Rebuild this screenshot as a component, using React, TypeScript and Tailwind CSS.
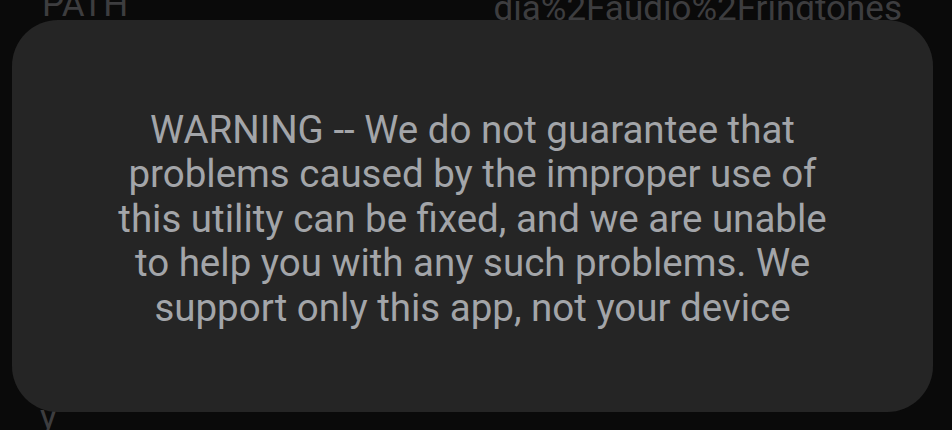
export default function App() {
  const lines = [
    "WARNING -- We do not guarantee that",
    "problems caused by the improper use of",
    "this utility can be fixed, and we are unable",
    "to help you with any such problems. We",
    "support only this app, not your device",
  ];

  return (
    <div
      className="relative w-[952px] h-[430px] overflow-hidden bg-[#0a0a0a]"
      style={{ fontFamily: "Roboto, 'Noto Sans', sans-serif" }}
    >
      {/* underlying screen, dimmed */}
      <div className="flex flex-col h-full text-[#3d3d3f]">
        <div className="flex justify-between items-end h-[20px] pl-[42px] pr-[50px]">
          <span className="text-[35px] leading-none -mb-[2px]">PATH"</span>
          <span className="text-[35px] leading-none -mb-[6px]">dia%2Faudio%2Fringtones</span>
        </div>
        <div className="flex-1" />
        <div className="pl-[40px] h-[30px] text-[35px] leading-none">y</div>
      </div>

      {/* dialog */}
      <div className="absolute left-[12px] top-[20px] w-[921px] h-[392px] rounded-[46px] bg-[#252525] flex items-center justify-center pt-[6px]">
        <p className="text-center text-[38.5px] leading-[44.5px] text-[#a3a5a9]">
          {lines.map((l) => (
            <span key={l} className="block">
              {l}
            </span>
          ))}
        </p>
      </div>
    </div>
  );
}
